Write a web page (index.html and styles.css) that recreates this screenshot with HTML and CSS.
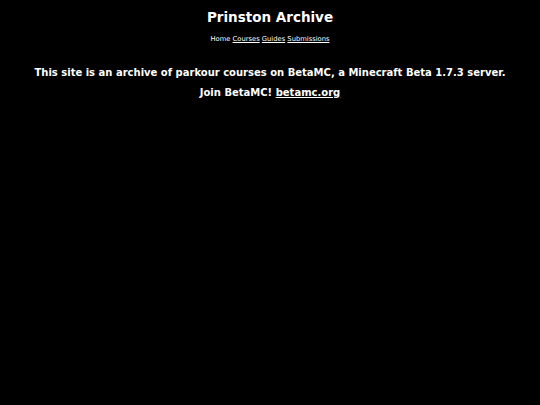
FILE: index.html
```html
<!DOCTYPE html>
<html>
<head>
<meta charset="utf-8">
<title>Prinston Archive</title>
<link rel="stylesheet" href="styles.css">
</head>
<body>
<header class="header">
  <h1 class="title">Prinston Archive</h1>
  <nav class="nav">
    <span class="nav-item">Home</span>
    <a class="nav-link" href="#">Courses</a>
    <a class="nav-link" href="#">Guides</a>
    <a class="nav-link" href="#">Submissions</a>
  </nav>
</header>
<main class="content">
  <p class="text">This site is an archive of parkour courses on BetaMC, a Minecraft Beta 1.7.3 server.</p>
  <p class="text">Join BetaMC! <a class="link" href="#">betamc.org</a></p>
</main>
</body>
</html>
```
FILE: styles.css
```css
html, body {
  background: #000;
}
body {
  margin: 0;
  padding: 9px 8px;
  color: #fff;
  font-family: "DejaVu Sans", Verdana, sans-serif;
  text-align: center;
}
.title {
  font-size: 13.5px;
  font-weight: bold;
  margin: 0;
  line-height: 16px;
}
.nav {
  font-size: 6.75px;
  margin-top: 10px;
  line-height: 8px;
}
.nav-link {
  color: #fff;
}
.content {
  margin-top: 24px;
}
.text {
  font-size: 10px;
  font-weight: bold;
  margin: 0 0 8px;
  line-height: 12px;
}
.link {
  color: #fff;
}
```
